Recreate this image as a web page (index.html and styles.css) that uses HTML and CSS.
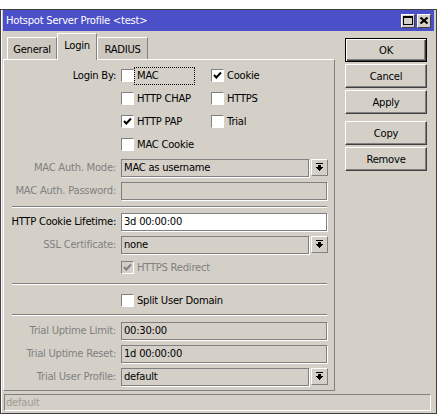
FILE: index.html
```html
<!DOCTYPE html>
<html>
<head>
<meta charset="utf-8">
<link rel="stylesheet" href="styles.css">
</head>
<body>
<div class="window">
  <div class="titlebar">
    <span class="title">Hotspot Server Profile &lt;test&gt;</span>
    <div class="tb-btns">
      <span class="tb-btn"><svg width="10" height="9" viewBox="0 0 10 9" shape-rendering="crispEdges"><rect x="0" y="0" width="10" height="2" fill="#000"/><rect x="0" y="0" width="1" height="9" fill="#000"/><rect x="9" y="0" width="1" height="9" fill="#000"/><rect x="0" y="8" width="10" height="1" fill="#000"/></svg></span>
      <span class="tb-btn"><svg width="8" height="7" viewBox="0 0 8 7"><path d="M0.5 0.5 L7.5 6.5 M7.5 0.5 L0.5 6.5" stroke="#000" stroke-width="2" fill="none"/></svg></span>
    </div>
  </div>
  <div class="main">
    <div class="left">
      <div class="tabs">
        <div class="tab tab-general">General</div>
        <div class="tab active">Login</div>
        <div class="tab tab-radius">RADIUS</div>
      </div>
      <div class="panel">
        <div class="row row-login">
          <span class="lbl">Login By:</span>
          <div class="checks">
            <div class="chk"><span class="box"></span><span class="ctext focus">MAC</span></div>
            <div class="chk"><span class="box"><svg width="11" height="11" viewBox="0 0 11 11"><path d="M2 5 L4.3 7.5 L9 2.5" stroke="#000" stroke-width="2" fill="none"/></svg></span><span class="ctext">Cookie</span></div>
            <div class="chk"><span class="box"></span><span class="ctext">HTTP CHAP</span></div>
            <div class="chk"><span class="box"></span><span class="ctext">HTTPS</span></div>
            <div class="chk"><span class="box"><svg width="11" height="11" viewBox="0 0 11 11"><path d="M2 5 L4.3 7.5 L9 2.5" stroke="#000" stroke-width="2" fill="none"/></svg></span><span class="ctext">HTTP PAP</span></div>
            <div class="chk"><span class="box"></span><span class="ctext">Trial</span></div>
            <div class="chk"><span class="box"></span><span class="ctext">MAC Cookie</span></div>
          </div>
        </div>
        <div class="row">
          <span class="lbl dis">MAC Auth. Mode:</span>
          <div class="combo"><div class="field">MAC as username</div><span class="ddbtn"><svg width="7" height="8" viewBox="0 0 7 8" shape-rendering="crispEdges"><rect x="0" y="0" width="7" height="1" fill="#000"/><rect x="2" y="2" width="3" height="2" fill="#000"/><rect x="0" y="4" width="7" height="1" fill="#000"/><rect x="1" y="5" width="5" height="1" fill="#000"/><rect x="2" y="6" width="3" height="1" fill="#000"/><rect x="3" y="7" width="1" height="1" fill="#000"/></svg></span></div>
        </div>
        <div class="row">
          <span class="lbl dis">MAC Auth. Password:</span>
          <div class="field wide"></div>
        </div>
        <div class="sep sep1"></div>
        <div class="row">
          <span class="lbl">HTTP Cookie Lifetime:</span>
          <div class="field wide white">3d 00:00:00</div>
        </div>
        <div class="row">
          <span class="lbl dis">SSL Certificate:</span>
          <div class="combo"><div class="field">none</div><span class="ddbtn"><svg width="7" height="8" viewBox="0 0 7 8" shape-rendering="crispEdges"><rect x="0" y="0" width="7" height="1" fill="#000"/><rect x="2" y="2" width="3" height="2" fill="#000"/><rect x="0" y="4" width="7" height="1" fill="#000"/><rect x="1" y="5" width="5" height="1" fill="#000"/><rect x="2" y="6" width="3" height="1" fill="#000"/><rect x="3" y="7" width="1" height="1" fill="#000"/></svg></span></div>
        </div>
        <div class="row">
          <span class="lbl"></span>
          <div class="chk"><span class="box disabled"><svg width="11" height="11" viewBox="0 0 11 11"><path d="M2 5 L4.3 7.5 L9 2.5" stroke="#808080" stroke-width="2" fill="none"/></svg></span><span class="ctext dis">HTTPS Redirect</span></div>
        </div>
        <div class="sep sep2"></div>
        <div class="row">
          <span class="lbl"></span>
          <div class="chk"><span class="box"></span><span class="ctext">Split User Domain</span></div>
        </div>
        <div class="sep sep3"></div>
        <div class="row">
          <span class="lbl dis">Trial Uptime Limit:</span>
          <div class="field wide">00:30:00</div>
        </div>
        <div class="row">
          <span class="lbl dis">Trial Uptime Reset:</span>
          <div class="field wide">1d 00:00:00</div>
        </div>
        <div class="row">
          <span class="lbl dis">Trial User Profile:</span>
          <div class="combo"><div class="field">default</div><span class="ddbtn"><svg width="7" height="8" viewBox="0 0 7 8" shape-rendering="crispEdges"><rect x="0" y="0" width="7" height="1" fill="#000"/><rect x="2" y="2" width="3" height="2" fill="#000"/><rect x="0" y="4" width="7" height="1" fill="#000"/><rect x="1" y="5" width="5" height="1" fill="#000"/><rect x="2" y="6" width="3" height="1" fill="#000"/><rect x="3" y="7" width="1" height="1" fill="#000"/></svg></span></div>
        </div>
      </div>
    </div>
    <div class="buttons">
      <div class="btn default">OK</div>
      <div class="btn">Cancel</div>
      <div class="btn gap-after">Apply</div>
      <div class="btn">Copy</div>
      <div class="btn">Remove</div>
    </div>
  </div>
  <div class="status">default</div>
</div>
</body>
</html>
```
FILE: styles.css
```css
body {
  margin: 0;
  background: #fff;
  font-family: "DejaVu Sans", sans-serif;
  font-size: 10px;
  letter-spacing: -0.25px;
  color: #000;
}

.window {
  margin-top: 9px;
  width: 437px;
  box-sizing: border-box;
  border: 1px solid #404040;
  background: #d4d0c8;
  padding: 0 2px 2px 2px;
  box-shadow: inset 1px 0 0 #fff;
}

.titlebar {
  height: 21px;
  background: #4c50c8;
  color: #fff;
  display: flex;
  align-items: center;
  padding-left: 3px;
}

.tb-btns {
  margin-left: auto;
  margin-right: 3px;
  display: flex;
  gap: 2px;
}

.tb-btn {
  width: 14px;
  height: 14px;
  box-sizing: border-box;
  background: #d4d0c8;
  border: 1px solid;
  border-color: #fff #404040 #404040 #fff;
  display: flex;
  align-items: center;
  justify-content: center;
}

.main {
  display: flex;
  margin-top: 2px;
}

.left {
  width: 332px;
  display: flex;
  flex-direction: column;
}

.tabs {
  display: flex;
  height: 26px;
  align-items: flex-end;
  padding-left: 4px;
  position: relative;
  z-index: 1;
}

.tab {
  height: 22px;
  box-sizing: border-box;
  background: #ccc8c0;
  border: 1px solid;
  border-color: #fff #808080 transparent #fff;
  border-bottom: none;
  display: flex;
  align-items: center;
  justify-content: center;
  padding-top: 1px;
}

.tab-general { width: 50px; }
.tab-radius { width: 51px; }

.tab.active {
  width: 40px;
  height: 27px;
  margin-bottom: -1px;
  background: #d4d0c8;
  padding-bottom: 4px;
}

.panel {
  height: 332px;
  box-sizing: border-box;
  border: 1px solid;
  border-color: #fff #808080 #808080 #fff;
  padding-top: 4px;
}

.row {
  display: flex;
  align-items: center;
  height: 23px;
}

.row-login {
  height: 92px;
  align-items: flex-start;
}

.row-login .lbl {
  height: 23px;
  line-height: 23px;
}

.lbl {
  width: 112px;
  text-align: right;
  margin-right: 5px;
  white-space: nowrap;
  flex: none;
}

.dis { color: #808080; }

.checks {
  display: grid;
  grid-template-columns: 90px 90px;
  grid-auto-rows: 23px;
}

.chk {
  display: flex;
  align-items: center;
}

.box {
  width: 13px;
  height: 13px;
  box-sizing: border-box;
  background: #fff;
  border: 1px solid;
  border-color: #808080 #fff #fff #808080;
  display: flex;
  align-items: center;
  justify-content: center;
  flex: none;
}

.box.disabled { background: #d4d0c8; }

.ctext { margin-left: 3px; white-space: nowrap; }

.ctext.focus {
  margin-left: 0;
  padding-left: 2px;
  width: 61px;
  height: 18px;
  box-sizing: border-box;
  border: 1px dotted #000;
  display: flex;
  align-items: center;
}

.field {
  height: 18px;
  box-sizing: border-box;
  border: 1px solid #808080;
  box-shadow: 1px 1px 0 #fff;
  padding-left: 2px;
  display: flex;
  align-items: center;
  white-space: nowrap;
  overflow: hidden;
}

.field.wide { width: 206px; }
.field.white { background: #fff; }

.combo {
  display: flex;
  width: 207px;
}

.combo .field { flex: 1; }

.ddbtn {
  width: 17px;
  height: 17px;
  margin-left: 2px;
  box-sizing: border-box;
  border: 1px solid;
  border-color: #fff #808080 #808080 #fff;
  display: flex;
  align-items: center;
  justify-content: center;
}

.sep {
  border-top: 1px solid #808080;
  border-bottom: 1px solid #fff;
  margin-left: 8px;
  margin-right: 7px;
}

.sep1 { margin-top: 4px; margin-bottom: 2px; }
.sep2 { margin-top: 4px; margin-bottom: 4px; }
.sep3 { margin-top: 2px; margin-bottom: 3px; }

.buttons {
  margin-left: 10px;
  width: 82px;
  padding-top: 5px;
  display: flex;
  flex-direction: column;
}

.btn {
  height: 24px;
  box-sizing: border-box;
  margin-bottom: 2px;
  border: 1px solid;
  border-color: #fff #404040 #404040 #fff;
  box-shadow: inset -1px -1px 0 #808080;
  display: flex;
  align-items: center;
  justify-content: center;
}

.btn.default {
  border-color: #000;
  box-shadow: inset 1px 1px 0 #fff, inset -1px -1px 0 #404040, inset -2px -2px 0 #808080;
}

.btn.gap-after { margin-bottom: 7px; }

.status {
  margin: 3px 3px 0 1px;
  height: 17px;
  box-sizing: border-box;
  border: 1px solid;
  border-color: #808080 #fff #fff #808080;
  color: #a09c96;
  padding-left: 1px;
  display: flex;
  align-items: center;
}
```
